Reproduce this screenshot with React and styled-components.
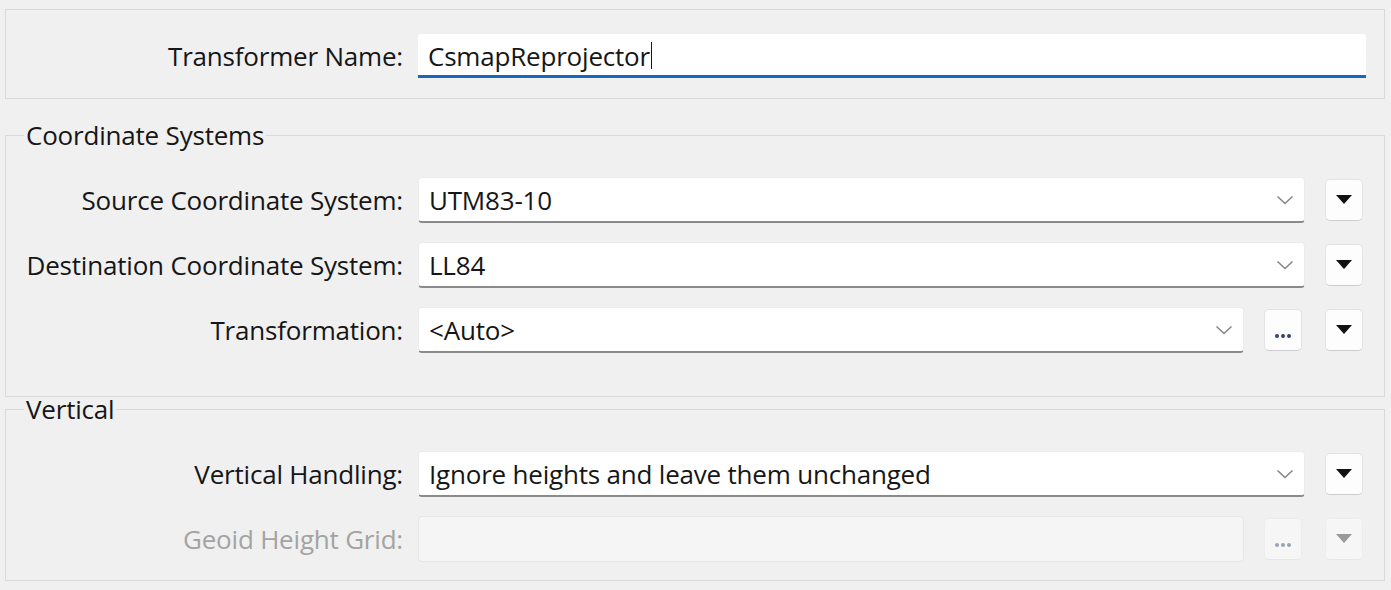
import React from "react";
import styled, { createGlobalStyle } from "styled-components";

const GlobalStyle = createGlobalStyle`
  html, body {
    margin: 0;
    padding: 0;
    background: #f0f0f0;
  }
  body {
    font-family: "Open Sans", "Noto Sans", sans-serif;
    color: #161616;
  }
`;

const Page = styled.div`
  width: 1391px;
  height: 590px;
  box-sizing: border-box;
  padding: 9px 6px 0 5px;
  display: flex;
  flex-direction: column;
`;

const NameBox = styled.div`
  height: 90px;
  box-sizing: border-box;
  border: 1px solid #d9d9d9;
  padding: 24px 18px 0 0;
`;

const Group = styled.fieldset`
  margin: ${(p) => p.$top}px 0 0 0;
  padding: ${(p) => p.$pad};
  border: 1px solid #d9d9d9;
  display: flex;
  flex-direction: column;
  gap: 19px;
  min-width: 0;
`;

const Legend = styled.legend`
  font-size: 26px;
  letter-spacing: -0.2px;
  line-height: 28px;
  color: #161616;
  padding: 0 2px;
  margin-left: 18px;
`;

const Row = styled.div`
  display: flex;
  align-items: center;
  height: ${(p) => p.$h || 46}px;
`;

const Label = styled.label`
  width: 412px;
  flex: none;
  text-align: right;
  font-size: 26px;
  letter-spacing: -0.2px;
  padding-right: 15px;
  box-sizing: border-box;
  color: ${(p) => (p.$disabled ? "#a3a3a3" : "#161616")};
  white-space: nowrap;
`;

const TextInput = styled.div`
  flex: 1;
  height: 44px;
  box-sizing: border-box;
  background: #fff;
  border-radius: 3px 3px 0 0;
  border-bottom: 3px solid #1767c0;
  display: flex;
  align-items: center;
  padding: 2px 0 0 10px;
  font-size: 26px;
  letter-spacing: -0.2px;
`;

const Caret = styled.span`
  display: inline-block;
  width: 1px;
  height: 27px;
  background: #161616;
  margin-left: 1px;
`;

const Combo = styled.div`
  flex: 1;
  height: 46px;
  box-sizing: border-box;
  background: #fff;
  border: 1px solid #ececec;
  border-bottom: 2px solid #8a8a8a;
  border-radius: 4px;
  display: flex;
  align-items: center;
  justify-content: space-between;
  padding: 0 10px 0 10px;
  font-size: 26px;
  letter-spacing: -0.2px;
`;

const DisabledField = styled.div`
  flex: 1;
  height: 46px;
  box-sizing: border-box;
  background: #f5f5f5;
  border: 1px solid #e6e6e6;
  border-radius: 4px;
`;

const SmallButton = styled.button`
  flex: none;
  width: 38px;
  height: 42px;
  margin-left: ${(p) => p.$gap}px;
  padding: 0;
  box-sizing: border-box;
  background: ${(p) => (p.$disabled ? "#f6f6f6" : "#fdfdfd")};
  border: 1px solid ${(p) => (p.$disabled ? "#ececec" : "#e2e2e2")};
  border-bottom-color: ${(p) => (p.$disabled ? "#e6e6e6" : "#cccccc")};
  border-radius: 5px;
  display: flex;
  align-items: center;
  justify-content: center;
  cursor: default;
`;

const Dots = styled.span`
  display: flex;
  gap: 2px;
  margin-top: 12px;
  & > i {
    width: 4px;
    height: 4px;
    border-radius: 50%;
    background: ${(p) => (p.$disabled ? "#9aa2b4" : "#34416a")};
  }
`;

const Chevron = () => (
  <svg width="18" height="10" viewBox="0 0 18 10">
    <path d="M1.5 1.5 L9 8.5 L16.5 1.5" fill="none" stroke="#858585" strokeWidth="1.5" />
  </svg>
);

const Triangle = ({ disabled }) => (
  <svg width="16" height="10" viewBox="0 0 16 10">
    <path d="M0 0 H16 L8 9 Z" fill={disabled ? "#9a9a9a" : "#111"} />
  </svg>
);

const Ellipsis = ({ disabled }) => (
  <SmallButton $gap={20} $disabled={disabled}>
    <Dots $disabled={disabled}>
      <i />
      <i />
      <i />
    </Dots>
  </SmallButton>
);

const ComboRow = ({ label, value, dots }) => (
  <Row>
    <Label>{label}</Label>
    <Combo>
      <span>{value}</span>
      <Chevron />
    </Combo>
    {dots && <Ellipsis />}
    <SmallButton $gap={dots ? 23 : 20}>
      <Triangle />
    </SmallButton>
  </Row>
);

export default function App() {
  return (
    <Page>
      <GlobalStyle />
      <NameBox>
        <Row $h={44}>
          <Label>Transformer Name:</Label>
          <TextInput>
            CsmapReprojector
            <Caret />
          </TextInput>
        </Row>
      </NameBox>

      <Group $top={22} $pad="28px 21px 43px 0">
        <Legend>Coordinate Systems</Legend>
        <ComboRow label="Source Coordinate System:" value="UTM83-10" />
        <ComboRow label="Destination Coordinate System:" value="LL84" />
        <ComboRow label="Transformation:" value="<Auto>" dots />
      </Group>

      <Group $top={-2} $pad="28px 21px 18px 0">
        <Legend>Vertical</Legend>
        <ComboRow
          label="Vertical Handling:"
          value="Ignore heights and leave them unchanged"
        />
        <Row>
          <Label $disabled>Geoid Height Grid:</Label>
          <DisabledField />
          <Ellipsis disabled />
          <SmallButton $gap={23} $disabled>
            <Triangle disabled />
          </SmallButton>
        </Row>
      </Group>
    </Page>
  );
}
